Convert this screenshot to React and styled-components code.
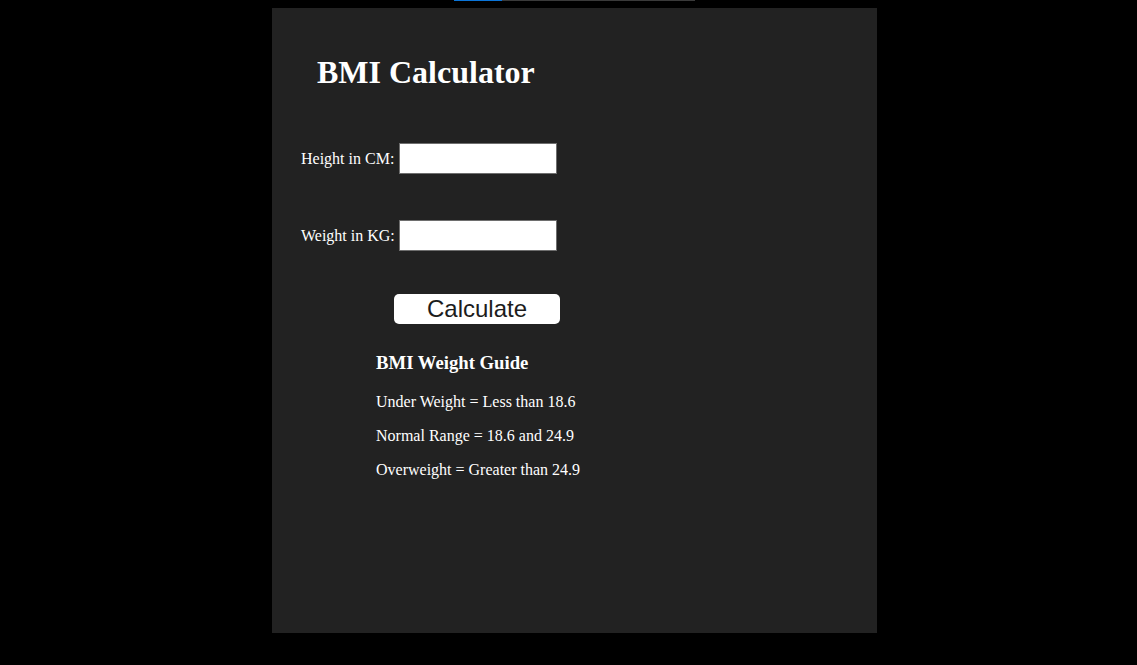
import React from "react";
import styled, { createGlobalStyle } from "styled-components";

const Global = createGlobalStyle`
  html, body { margin: 0; padding: 0; background: #000; }
  body { font-family: "Liberation Serif", "Times New Roman", serif; color: #fff; }
  #root { min-height: 665px; }
`;

const Page = styled.div`
  position: relative;
  padding: 8px 0 32px 272px;
`;

const TopProgress = styled.div`
  position: absolute;
  top: 0;
  left: 454px;
  width: 241px;
  height: 1px;
  display: flex;
  background: #3a3a3a;
`;

const ProgressFill = styled.div`
  width: 48px;
  background: #0a74d8;
`;

const Card = styled.main`
  box-sizing: border-box;
  width: 605px;
  height: 625px;
  background: #222222;
  padding: 46px 0 0 29px;
  display: flex;
  flex-direction: column;
  align-items: flex-start;
`;

const Title = styled.h1`
  margin: 0 0 0 16px;
  font-size: 32px;
  line-height: 36px;
  font-weight: bold;
`;

const Row = styled.div`
  display: flex;
  align-items: center;
  margin-top: ${(p) => p.$top}px;
`;

const Label = styled.label`
  width: 98px;
  font-size: 16px;
  line-height: 18px;
`;

const Input = styled.input`
  box-sizing: border-box;
  width: 158px;
  height: 31px;
  margin: 0;
  border: 1px solid #6e6e6e;
  border-radius: 0;
  background: #fff;
  font-size: 16px;
`;

const Button = styled.button`
  box-sizing: border-box;
  margin: 43px 0 0 93px;
  width: 166px;
  height: 30px;
  border: none;
  border-radius: 5px;
  background: #fff;
  color: #1c1c1c;
  font-family: "Liberation Sans", Arial, sans-serif;
  font-size: 24px;
  line-height: 30px;
  padding: 0;
`;

const Guide = styled.section`
  margin: 28px 0 0 75px;
  display: flex;
  flex-direction: column;
  gap: 16px;
`;

const GuideTitle = styled.h3`
  margin: 0 0 4px;
  font-size: 18.72px;
  line-height: 21px;
  font-weight: bold;
`;

const GuideLine = styled.p`
  margin: 0;
  font-size: 16px;
  line-height: 18px;
`;

export default function App() {
  return (
    <Page>
      <Global />
      <TopProgress>
        <ProgressFill />
      </TopProgress>
      <Card>
        <Title>BMI Calculator</Title>
        <Row $top={53}>
          <Label htmlFor="h">Height in CM:</Label>
          <Input id="h" type="text" />
        </Row>
        <Row $top={46}>
          <Label htmlFor="w">Weight in KG:</Label>
          <Input id="w" type="text" />
        </Row>
        <Button>Calculate</Button>
        <Guide>
          <GuideTitle>BMI Weight Guide</GuideTitle>
          <GuideLine>Under Weight = Less than 18.6</GuideLine>
          <GuideLine>Normal Range = 18.6 and 24.9</GuideLine>
          <GuideLine>Overweight = Greater than 24.9</GuideLine>
        </Guide>
      </Card>
    </Page>
  );
}
